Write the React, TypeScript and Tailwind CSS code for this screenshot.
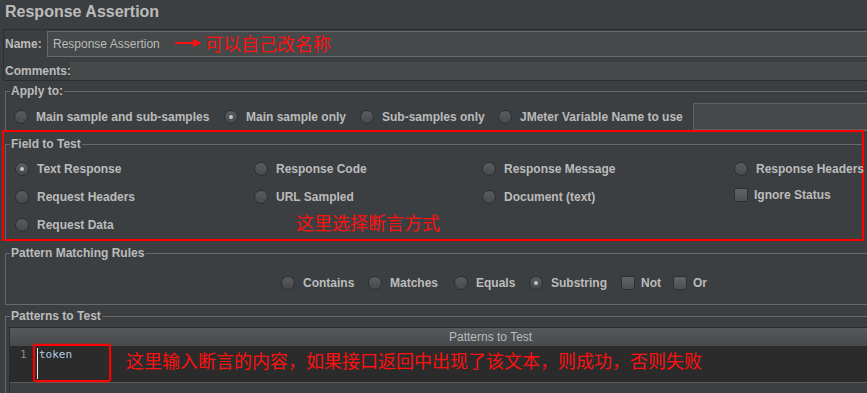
import React from "react";

const Radio = ({ checked }: { checked?: boolean }) => (
  <span className="w-[14px] h-[14px] rounded-full shrink-0 border border-[#2c2e30] bg-linear-to-b from-[#5a5e61] to-[#45494c] flex items-center justify-center">
    {checked && <span className="w-[4px] h-[4px] rounded-full bg-[#c4c4c4]" />}
  </span>
);

const Check = () => (
  <span className="w-[14px] h-[14px] rounded-[2px] shrink-0 border border-[#2c2e30] bg-linear-to-b from-[#606467] to-[#4c5053]" />
);

const Opt = ({ label, checked, w }: { label: string; checked?: boolean; w?: string }) => (
  <div className={`flex items-center gap-[8px] shrink-0 ${w ?? ""}`}>
    <Radio checked={checked} />
    <span className="whitespace-nowrap">{label}</span>
  </div>
);

const ChkOpt = ({ label, w }: { label: string; w?: string }) => (
  <div className={`flex items-center gap-[6px] shrink-0 ${w ?? ""}`}>
    <Check />
    <span className="whitespace-nowrap">{label}</span>
  </div>
);

const Legend = ({ children }: { children: React.ReactNode }) => (
  <legend className="ml-[4px] px-[1px] text-[12px] font-bold leading-[14px] text-[#bbbbbb]">{children}</legend>
);

export default function App() {
  return (
    <div
      className="w-[867px] h-[393px] overflow-hidden bg-[#3c3f41] text-[#bbbbbb] text-[12px] font-bold leading-[14px] flex flex-col"
      style={{ fontFamily: '"Liberation Sans", Arial, "Noto Sans CJK SC", sans-serif' }}
    >
      {/* Title */}
      <div className="h-[29px] pt-[1px] pl-[5px] text-[16px] leading-[22px] font-bold shrink-0">Response Assertion</div>

      {/* Name / Comments */}
      <div className="ml-[3px] border-t border-b border-l border-[#2c2e30] pt-[1px] pl-[1px] flex flex-col gap-[5px] shrink-0">
        <div className="flex h-[26px]">
          <div className="w-[42px] flex items-center">Name:</div>
          <div className="relative flex-1 bg-[#45494a] border-t border-b border-l border-[#666869] flex items-center pl-[5px] font-normal">
            <span>Response Assertion</span>
            <svg className="absolute left-[127px] top-[6px]" width="27" height="10" viewBox="0 0 27 10">
              <line x1="0" y1="5" x2="20" y2="5" stroke="#ff1010" strokeWidth="2" />
              <polygon points="18,1 27,5 18,9" fill="#ff1010" />
            </svg>
            <span
              className="absolute left-[157px] top-[1px] text-[18px] leading-[20px] text-[#ff1010] whitespace-nowrap"
              style={{ fontFamily: '"Noto Sans CJK SC", sans-serif' }}
            >
              可以自己改名称
            </span>
          </div>
        </div>
        <div className="flex h-[18px]">
          <div className="w-[65px] flex items-center">Comments:</div>
          <div className="flex-1 bg-[#45494a]" />
        </div>
      </div>

      {/* Apply to */}
      <fieldset className="mt-[3px] ml-[5px] border-t border-l border-b border-[#67696b] min-w-0 shrink-0">
        <Legend>Apply to:</Legend>
        <div className="mt-[5px] h-[27px] pl-[8px] flex items-center">
          <Opt label="Main sample and sub-samples" w="w-[210px]" />
          <Opt label="Main sample only" checked w="w-[136px]" />
          <Opt label="Sub-samples only" w="w-[138px]" />
          <Opt label="JMeter Variable Name to use" w="w-[195px]" />
          <div className="flex-1 h-[27px] bg-[#45494a] border-t border-l border-b border-[#5f6162]" />
        </div>
      </fieldset>

      {/* Field to Test (annotated) */}
      <div className="relative -mt-[1px] ml-[2px] w-[862px] border-2 border-[#ff0000] shrink-0">
        <fieldset className="mt-[5px] ml-[1px] border-t border-l border-[#67696b] min-w-0">
          <Legend>Field to Test</Legend>
          <div className="mt-[4px] pl-[9px] grid grid-cols-[239px_228px_252px_1fr] auto-rows-[28px] items-center">
            <Opt label="Text Response" checked />
            <Opt label="Response Code" />
            <Opt label="Response Message" />
            <Opt label="Response Headers" />
            <Opt label="Request Headers" />
            <Opt label="URL Sampled" />
            <Opt label="Document (text)" />
            <div className="pb-[4px]">
              <ChkOpt label="Ignore Status" />
            </div>
            <Opt label="Request Data" />
          </div>
        </fieldset>
        <span
          className="absolute left-[292px] top-[80px] text-[18px] leading-[20px] font-normal text-[#ff1010] whitespace-nowrap"
          style={{ fontFamily: '"Noto Sans CJK SC", sans-serif' }}
        >
          这里选择断言方式
        </span>
      </div>

      {/* Pattern Matching Rules */}
      <fieldset className="mt-[5px] ml-[5px] border-t border-l border-b border-[#67696b] min-w-0 shrink-0">
        <Legend>Pattern Matching Rules</Legend>
        <div className="mt-[9px] mb-[7px] h-[28px] pl-[275px] flex items-center">
          <Opt label="Contains" w="w-[87px]" />
          <Opt label="Matches" w="w-[86px]" />
          <Opt label="Equals" w="w-[75px]" />
          <Opt label="Substring" checked w="w-[92px]" />
          <ChkOpt label="Not" w="w-[52px]" />
          <ChkOpt label="Or" />
        </div>
      </fieldset>

      {/* Patterns to Test */}
      <fieldset className="mt-[4px] ml-[5px] border-t border-l border-[#67696b] min-w-0 flex-1">
        <Legend>Patterns to Test</Legend>
        <div className="mt-[4px] ml-[3px] border-t border-l border-[#2b2b2b] flex flex-col">
          <div className="h-[18px] bg-linear-to-b from-[#55595b] to-[#474a4c] pl-[439px] flex items-center font-normal text-[12px]">
            Patterns to Test
          </div>
          <div className="relative h-[36px] bg-[#2b2b2b] flex">
            <div
              className="w-[27px] pl-[10px] pt-[2px] text-[11px] leading-[14px] font-normal text-[#8a8a8a]"
              style={{ fontFamily: '"DejaVu Sans Mono", monospace' }}
            >
              1
            </div>
            <div
              className="mt-[2px] h-[31px] border-l border-[#e8e8e8] pl-[1px] text-[11px] leading-[14px] font-normal text-[#b6cbe2]"
              style={{ fontFamily: '"DejaVu Sans Mono", monospace' }}
            >
              token
            </div>
            <div className="absolute left-[23px] -top-[2px] w-[78px] h-[38px] border-2 border-[#ff0000] rounded-[3px] shadow-[0_0_2px_rgba(255,0,0,0.7)]" />
            <span
              className="absolute left-[116px] top-[4px] text-[18px] leading-[20px] font-normal text-[#ff1010] whitespace-nowrap"
              style={{ fontFamily: '"Noto Sans CJK SC", sans-serif' }}
            >
              这里输入断言的内容，如果接口返回中出现了该文本，则成功，否则失败
            </span>
          </div>
          <div className="h-[14px] border-t border-[#5a5d5f] bg-[#3c3f41]" />
        </div>
      </fieldset>
    </div>
  );
}
